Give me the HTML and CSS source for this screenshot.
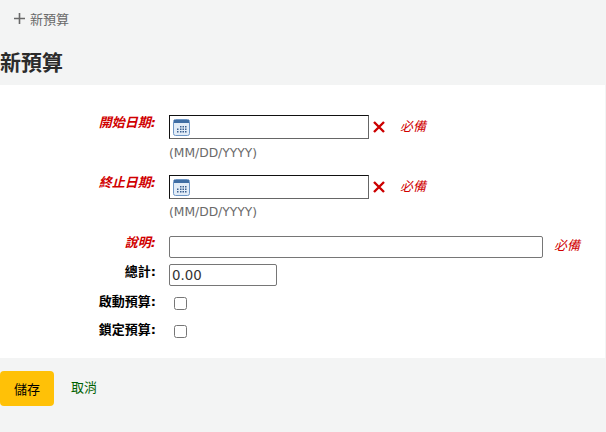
FILE: index.html
```html
<!DOCTYPE html>
<html lang="zh-Hant">
<head>
    <meta charset="UTF-8">
    <meta name="viewport" content="width=device-width, initial-scale=1.0">
    <title>新預算</title>
    <link rel="stylesheet" href="styles.css">
</head>
<body>
    <div class="toolbar">
        <a class="new-link" href="#">
            <svg class="plus" width="11" height="11" viewBox="0 0 11 11"><path d="M4.700 0h1.600v4.700h4.700v1.600h-4.700v4.700h-1.600v-4.700h-4.700v-1.600h4.700z"/></svg>
            新預算
        </a>
    </div>
    <h1>新預算</h1>
    <form class="panel">
        <div class="row date-row">
            <label class="required">開始日期:</label>
            <div class="field">
                <div class="line">
                    <div class="date-input">
                        <svg class="cal" width="17" height="17" viewBox="0 0 17 17">
                            <rect x="0.5" y="0.500" width="16" height="16" rx="2" fill="#e2ecf7" stroke="#6f97c6"/>
                            <rect x="1" y="1" width="15" height="3" fill="#3f6da3"/>
                            <path d="M7 7h1.500v1.500h-1.500zM9.500 7h1.500v1.500h-1.500zM12 7h1.500v1.500h-1.500zM4 9.500h1.500v1.500h-1.500zM7 9.500h1.500v1.500h-1.500zM9.500 9.500h1.500v1.500h-1.500zM12 9.500h1.500v1.500h-1.500zM4 12h1.500v1.500h-1.500zM7 12h1.500v1.500h-1.500zM9.500 12h1.500v1.500h-1.500zM12 12h1.500v1.500h-1.500z" fill="#3a5f8f"/>
                        </svg>
                    </div>
                    <svg class="clear" width="14" height="14" viewBox="0 0 14 14"><path d="M2 2l10 10M12 2l-10 10"/></svg>
                    <span class="must">必備</span>
                </div>
                <div class="hint">(MM/DD/YYYY)</div>
            </div>
        </div>
        <div class="row date-row">
            <label class="required">終止日期:</label>
            <div class="field">
                <div class="line">
                    <div class="date-input">
                        <svg class="cal" width="17" height="17" viewBox="0 0 17 17">
                            <rect x="0.5" y="0.500" width="16" height="16" rx="2" fill="#e2ecf7" stroke="#6f97c6"/>
                            <rect x="1" y="1" width="15" height="3" fill="#3f6da3"/>
                            <path d="M7 7h1.500v1.500h-1.500zM9.500 7h1.500v1.500h-1.500zM12 7h1.500v1.500h-1.500zM4 9.500h1.500v1.500h-1.500zM7 9.500h1.500v1.500h-1.500zM9.500 9.500h1.500v1.500h-1.500zM12 9.500h1.500v1.500h-1.500zM4 12h1.500v1.500h-1.500zM7 12h1.500v1.500h-1.500zM9.500 12h1.500v1.500h-1.500zM12 12h1.500v1.500h-1.500z" fill="#3a5f8f"/>
                        </svg>
                    </div>
                    <svg class="clear" width="14" height="14" viewBox="0 0 14 14"><path d="M2 2l10 10M12 2l-10 10"/></svg>
                    <span class="must">必備</span>
                </div>
                <div class="hint">(MM/DD/YYYY)</div>
            </div>
        </div>
        <div class="row desc-row">
            <label class="required">說明:</label>
            <div class="line">
                <input type="text" class="desc">
                <span class="must must-wide">必備</span>
            </div>
        </div>
        <div class="row total-row">
            <label>總計:</label>
            <input type="text" class="total" value="0.00">
        </div>
        <div class="row check-row">
            <label>啟動預算:</label>
            <input type="checkbox">
        </div>
        <div class="row check-row">
            <label>鎖定預算:</label>
            <input type="checkbox">
        </div>
    </form>
    <div class="actions">
        <button type="button" class="save">儲存</button>
        <a class="cancel" href="#">取消</a>
    </div>
</body>
</html>
```

FILE: styles.css
```css
body {
    font-family: "DejaVu Sans", "Noto Sans CJK TC", sans-serif;
    font-size: 13px;
    margin: 0;
    background-color: #f3f4f4;
    color: #000;
}
.toolbar {
    height: 37px;
    padding-left: 14px;
    display: flex;
    align-items: center;
}
.new-link {
    color: #696969;
    text-decoration: none;
    display: flex;
    align-items: center;
    gap: 5px;
}
.plus {
    fill: #696969;
}
h1 {
    font-size: 21px;
    font-weight: bold;
    line-height: 30px;
    margin: 11px 0 7px 0;
    color: #2b2b2b;
}
.panel {
    background-color: white;
    margin-right: 1px;
    padding-top: 30px;
    box-sizing: border-box;
    height: 273px;
}
.row {
    display: flex;
    align-items: flex-start;
}
label {
    width: 156px;
    margin-right: 13px;
    text-align: right;
    font-weight: bold;
    line-height: 15px;
}
.required {
    color: #d00000;
    font-style: italic;
}
.date-row {
    height: 60px;
}
.line {
    display: flex;
    align-items: center;
}
.date-input {
    width: 200px;
    height: 24px;
    box-sizing: border-box;
    border: 1px solid;
    border-color: #111 #666 #666 #111;
    display: flex;
    align-items: center;
    padding-left: 3px;
}
.clear {
    margin-left: 3px;
    stroke: #cc0000;
    stroke-width: 2.400;
    fill: none;
}
.must {
    color: #d00000;
    font-style: italic;
    margin-left: 14px;
    padding-bottom: 4px;
}
.must-wide {
    margin-left: 11px;
}
.hint {
    color: #696969;
    font-size: 12.300px;
    margin-top: 6px;
    line-height: 16px;
}
.date-row + .date-row .hint {
    margin-top: 5px;
}
input[type="text"] {
    font-family: "DejaVu Sans", sans-serif;
    font-size: 13.333px;
    box-sizing: border-box;
    border: 1px solid #767676;
    border-radius: 2px;
    padding: 0 2px;
    margin: 0;
    height: 22px;
    background: white;
}
.desc {
    width: 374px;
}
.total {
    width: 108px;
    padding-bottom: 2px;
    color: #333;
}
.desc-row {
    height: 29px;
}
.total-row {
    height: 33px;
}
.check-row {
    height: 28px;
}
.check-row label {
    margin-top: -3px;
}
input[type="checkbox"] {
    margin: 0 0 0 5px;
    width: 13px;
    height: 13px;
}
.actions {
    display: flex;
    align-items: center;
    padding-top: 13px;
}
.save {
    font-family: "DejaVu Sans", "Noto Sans CJK TC", sans-serif;
    font-size: 13px;
    background-color: #ffc107;
    border: none;
    border-radius: 4px;
    width: 54px;
    height: 35px;
    padding: 0 0 1px 0;
    color: #000;
}
.cancel {
    color: #006100;
    text-decoration: none;
    margin-left: 17px;
    padding-bottom: 5px;
}
```
